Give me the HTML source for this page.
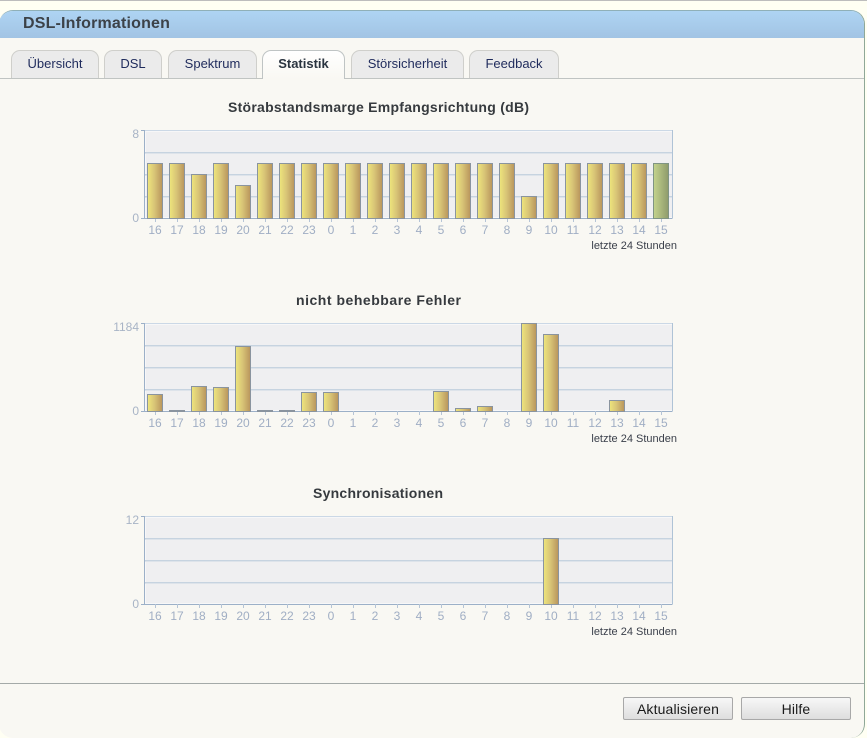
<!DOCTYPE html>
<html lang="de"><head><meta charset="utf-8"><title>DSL-Informationen</title>
<style>
html,body{margin:0;padding:0;background:#fffff3;width:867px;height:738px;overflow:hidden;font-family:"Liberation Sans",Arial,sans-serif}
#top{position:absolute;left:0;top:0;width:867px;height:1px;background:#bdbdbd}
#panel{position:absolute;left:-1px;top:10px;width:865px;height:727px;background:#f9f8f3;border-right:1px solid #8fa898;border-top:1px solid #8fb0b8;border-radius:14px;box-sizing:content-box;overflow:hidden}
#head{position:absolute;left:0;top:0;width:100%;height:27px;background:linear-gradient(#aed4f3,#a2c4e4)}
#head span{position:absolute;left:24px;top:4px;font:bold 16px "Liberation Sans",sans-serif;letter-spacing:.18px;color:#3c4248;white-space:nowrap}
.tab{position:absolute;top:50px;height:28px;box-sizing:border-box;background:#ebebeb;border:1px solid #cfcfcb;border-bottom:0;border-radius:9px 9px 0 0;text-align:center;font-size:13px;line-height:25px;color:#1f2b5c}
.tab.on{height:29px;border-color:#bfc4c4;color:#2a3440;font-weight:bold;font-size:13px;line-height:25px;background:linear-gradient(#fff,#f9f8f3)}
#tabline{position:absolute;left:0;top:78px;width:864px;height:1px;background:#c0c4c2}
#foot{position:absolute;left:0;top:683px;width:864px;height:1px;background:#a4aaa8}
.btn{position:absolute;top:697px;width:110px;height:23px;box-sizing:border-box;border:1px solid #a8a8a8;border-radius:2px;background:linear-gradient(#f7f7f7,#dedede);text-align:center;font-size:14px;letter-spacing:.15px;line-height:22px;color:#1a1a1a}
svg{position:absolute;left:0;top:0}
text{font-family:"Liberation Sans",Arial,sans-serif}
.t{font-size:14px;font-weight:bold;fill:#363a3e}
.x{font-size:12px;fill:#a0aec4;text-anchor:middle}
.y{font-size:12px;fill:#a8b4c6;text-anchor:end}
.n{font-size:11px;fill:#3a3f4a;text-anchor:end}
</style></head><body>
<div id="top"></div>
<div id="panel"><div id="head"><span>DSL-Informationen</span></div></div>
<div class="tab" style="left:11px;width:88px">Übersicht</div>
<div class="tab" style="left:104px;width:58px">DSL</div>
<div class="tab" style="left:168px;width:89px">Spektrum</div>
<div class="tab" style="left:351px;width:113px">Störsicherheit</div>
<div class="tab" style="left:469px;width:90px">Feedback</div>
<div id="tabline"></div>
<div class="tab on" style="left:262px;width:83px">Statistik</div>
<div id="foot"></div>
<div class="btn" style="left:623px">Aktualisieren</div>
<div class="btn" style="left:741px">Hilfe</div>
<svg width="867" height="738" viewBox="0 0 867 738" xmlns="http://www.w3.org/2000/svg">
<defs>
<linearGradient id="g"><stop offset="0" stop-color="#eee67c"/><stop offset=".45" stop-color="#d9c577"/><stop offset="1" stop-color="#b8945c"/></linearGradient>
<linearGradient id="h"><stop offset="0" stop-color="#c4d48c"/><stop offset="1" stop-color="#8e9a6c"/></linearGradient>
<g id="frame">
<rect x="144" y="0" width="528" height="88" fill="#efeff1"/>
<path d="M144 1.500H672M145.500 1V87M145 87.500H672" stroke="#f7f7f8" fill="none"/>
<path d="M144.500 .5H672.500" fill="none" stroke="#cbd8e6"/>
<path d="M145 23.500H672M145 45.500H672M145 67.500H672" stroke="#dde3ea" fill="none"/>
<path d="M145 22.500H672M145 44.500H672M145 66.500H672" stroke="#c6d3e0" fill="none"/>
<path d="M672.500 0V88" stroke="#afc3d6" fill="none"/>
<path d="M141 .5H144.500V88.500H141M144.500 88.500H672.500" fill="none" stroke="#9cb0c8"/>
<path d="M155.500 88V92M177.500 88V92M199.500 88V92M221.500 88V92M243.500 88V92M265.500 88V92M287.500 88V92M309.500 88V92M331.500 88V92M353.500 88V92M375.500 88V92M397.500 88V92M419.500 88V92M441.500 88V92M463.500 88V92M485.500 88V92M507.500 88V92M529.500 88V92M551.500 88V92M573.500 88V92M595.500 88V92M617.500 88V92M639.500 88V92M661.500 88V92" stroke="#b5c4d6"/>
<text class="x" x="155" y="104">16</text><text class="x" x="177" y="104">17</text><text class="x" x="199" y="104">18</text><text class="x" x="221" y="104">19</text><text class="x" x="243" y="104">20</text><text class="x" x="265" y="104">21</text><text class="x" x="287" y="104">22</text><text class="x" x="309" y="104">23</text><text class="x" x="331" y="104">0</text><text class="x" x="353" y="104">1</text><text class="x" x="375" y="104">2</text><text class="x" x="397" y="104">3</text><text class="x" x="419" y="104">4</text><text class="x" x="441" y="104">5</text><text class="x" x="463" y="104">6</text><text class="x" x="485" y="104">7</text><text class="x" x="507" y="104">8</text><text class="x" x="529" y="104">9</text><text class="x" x="551" y="104">10</text><text class="x" x="573" y="104">11</text><text class="x" x="595" y="104">12</text><text class="x" x="617" y="104">13</text><text class="x" x="639" y="104">14</text><text class="x" x="661" y="104">15</text>
<text class="n" x="677" y="119">letzte 24 Stunden</text>
<text class="y" x="139" y="92">0</text>
</g>
</defs>

<text class="t" x="228" y="112" textLength="301" lengthAdjust="spacing">Störabstandsmarge Empfangsrichtung (dB)</text>
<use href="#frame" x="0" y="130"/>
<text class="y" x="139" y="138">8</text>
<g stroke="#8a949f" fill="url(#g)">
<rect x="147.500" y="163.500" width="15" height="55"/><rect x="169.500" y="163.500" width="15" height="55"/><rect x="191.500" y="174.500" width="15" height="44"/><rect x="213.500" y="163.500" width="15" height="55"/><rect x="235.500" y="185.500" width="15" height="33"/><rect x="257.500" y="163.500" width="15" height="55"/><rect x="279.500" y="163.500" width="15" height="55"/><rect x="301.500" y="163.500" width="15" height="55"/><rect x="323.500" y="163.500" width="15" height="55"/><rect x="345.500" y="163.500" width="15" height="55"/><rect x="367.500" y="163.500" width="15" height="55"/><rect x="389.500" y="163.500" width="15" height="55"/><rect x="411.500" y="163.500" width="15" height="55"/><rect x="433.500" y="163.500" width="15" height="55"/><rect x="455.500" y="163.500" width="15" height="55"/><rect x="477.500" y="163.500" width="15" height="55"/><rect x="499.500" y="163.500" width="15" height="55"/><rect x="521.500" y="196.500" width="15" height="22"/><rect x="543.500" y="163.500" width="15" height="55"/><rect x="565.500" y="163.500" width="15" height="55"/><rect x="587.500" y="163.500" width="15" height="55"/><rect x="609.500" y="163.500" width="15" height="55"/><rect x="631.500" y="163.500" width="15" height="55"/>
<rect x="653.500" y="163.500" width="15" height="55" fill="url(#h)" stroke="#7f9484"/>
</g>

<text class="t" x="296" y="305" textLength="165" lengthAdjust="spacing">nicht behebbare Fehler</text>
<use href="#frame" x="0" y="323"/>
<text class="y" x="139" y="331">1184</text>
<g stroke="#8a949f" fill="url(#g)">
<rect x="147.500" y="394.500" width="15" height="17"/><rect x="169.500" y="410.500" width="15" height="1"/><rect x="191.500" y="386.500" width="15" height="25"/><rect x="213.500" y="387.500" width="15" height="24"/><rect x="235.500" y="346.500" width="15" height="65"/><rect x="257.500" y="410.500" width="15" height="1"/><rect x="279.500" y="410.500" width="15" height="1"/><rect x="301.500" y="392.500" width="15" height="19"/><rect x="323.500" y="392.500" width="15" height="19"/><rect x="433.500" y="391.500" width="15" height="20"/><rect x="455.500" y="408.500" width="15" height="3"/><rect x="477.500" y="406.500" width="15" height="5"/><rect x="521.500" y="323.500" width="15" height="88"/><rect x="543.500" y="334.500" width="15" height="77"/><rect x="609.500" y="400.500" width="15" height="11"/>
</g>

<text class="t" x="313" y="498" textLength="130" lengthAdjust="spacing">Synchronisationen</text>
<use href="#frame" x="0" y="516"/>
<text class="y" x="139" y="524">12</text>
<rect x="543.500" y="538.500" width="15" height="66" stroke="#8a949f" fill="url(#g)"/>
</svg>
</body></html>
